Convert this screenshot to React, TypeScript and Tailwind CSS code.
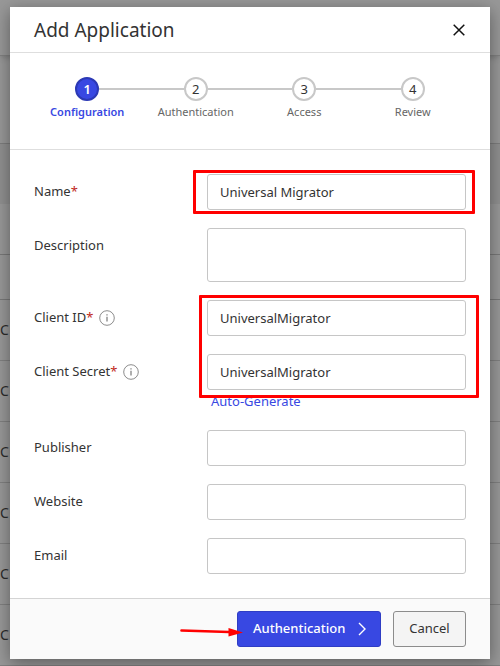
import React from 'react';

const steps = ['Configuration', 'Authentication', 'Access', 'Review'];

const inputClass =
  'block w-full h-9 px-3 rounded-[3px] border border-[#c6c6c6] bg-white text-[13px] text-[#333333] outline-none';

interface FieldProps {
  id: string;
  label: string;
  required?: boolean;
  info?: boolean;
  children: React.ReactNode;
}

function Field({ id, label, required, info, children }: FieldProps) {
  return (
    <div className="flex items-start">
      <div className="w-[173px] h-9 flex-shrink-0 flex items-center">
        <label htmlFor={id}>
          {label}
          {required && <span className="text-[#c0281c]">*</span>}
        </label>
        {info && <InfoIcon />}
      </div>
      <div className="relative flex-1 min-w-0">{children}</div>
    </div>
  );
}

function InfoIcon() {
  return (
    <svg className="w-4 h-4 ml-1.5 flex-shrink-0" viewBox="0 0 16 16" fill="none" stroke="#8c8c8c">
      <circle cx="8" cy="8" r="7.3" />
      <path d="M8 6.8v4.7" strokeWidth="1.4" />
      <path d="M8 4.2v1.4" strokeWidth="1.4" />
    </svg>
  );
}

function Stepper() {
  return (
    <ol className="grid grid-cols-4 px-[23px] pt-6 pb-7 border-b border-[#dedede]">
      {steps.map((step, i) => (
        <li key={step} className="relative flex flex-col items-center">
          {i > 0 && (
            <span className="absolute top-[11px] left-[calc(-50%+12px)] right-[calc(50%+12px)] h-0.5 bg-[#c8c8c8]" />
          )}
          <span
            className={`w-6 h-6 rounded-full border-2 flex items-center justify-center text-[13px] leading-5 ${
              i === 0 ? 'bg-[#3848e2] border-[#2c39b5] text-white font-semibold' : 'bg-white border-[#c8c8c8] text-[#333333]'
            }`}
          >
            {i + 1}
          </span>
          <span
            className={`mt-0.5 text-[11px] leading-[18px] ${i === 0 ? 'text-[#3848e2] font-semibold' : 'text-[#666666]'}`}
          >
            {step}
          </span>
        </li>
      ))}
    </ol>
  );
}

// Dimmed application list behind the dialog
function PageBehind() {
  return (
    <div aria-hidden="true" className="text-sm text-[#2b2b2b]">
      <div className="h-14 border-b border-[#808080] bg-[#989898] shadow-md" />
      <div className="h-[88px] border-b border-[#7d7d7d]" />
      <div className="h-[60px] bg-[#909090]" />
      <div className="h-[51px] border-b border-[#787878]" />
      <div className="h-[45px] border-b border-[#787878]" />
      {[0, 1, 2, 3, 4, 5].map((row) => (
        <div key={row} className="h-[61px] border-b border-[#808080] flex items-center">
          C
        </div>
      ))}
    </div>
  );
}

export default function App() {
  return (
    <div className="relative min-h-screen overflow-hidden bg-[#989898] font-['Noto_Sans',sans-serif]">
      <PageBehind />
      <div
        role="dialog"
        aria-labelledby="dialog-title"
        className="absolute top-[7px] inset-x-2.5 bg-white text-[13px] text-[#333333] shadow-[0_4px_16px_0_rgba(0,0,0,0.4)]"
      >
        <header className="h-[46px] pl-6 pr-[22px] flex items-center justify-between border-b border-[#dedede]">
          <h1 id="dialog-title" className="text-[19px] leading-6">Add Application</h1>
          <button type="button" aria-label="Close" className="w-[18px] h-[18px] flex items-center justify-center">
            <svg className="w-3 h-3" viewBox="0 0 12 12" fill="none" stroke="#111111" strokeWidth="1.5">
              <path d="M.7.7l10.6 10.6M11.3.7L.7 11.3" />
            </svg>
          </button>
        </header>

        <Stepper />

        <form>
          <div className="px-6 py-6 flex flex-col gap-[18px]">
            <Field id="name" label="Name" required>
              <input id="name" type="text" defaultValue="Universal Migrator" className={inputClass} />
              <span className="absolute -inset-y-1 -left-3.5 -right-[9px] border-3 border-[#ff0000] rounded-[1px] pointer-events-none" />
            </Field>
            <Field id="description" label="Description">
              <textarea
                id="description"
                className="block w-full h-[54px] px-3 py-2 rounded-[3px] border border-[#c6c6c6] bg-white resize-none outline-none"
              />
            </Field>
            <div className="relative flex flex-col gap-[18px]">
              <Field id="client-id" label="Client ID" required info>
                <input id="client-id" type="text" defaultValue="UniversalMigrator" className={inputClass} />
              </Field>
              <Field id="client-secret" label="Client Secret" required info>
                <input id="client-secret" type="text" defaultValue="UniversalMigrator" className={inputClass} />
                <a href="#generate" className="block h-[22px] pl-1 leading-[22px] text-[#3848e2]">
                  Auto-Generate
                </a>
              </Field>
              <span className="absolute -top-[5px] bottom-3.5 left-[165px] -right-[13px] border-3 border-[#ff0000] rounded-[1px] pointer-events-none" />
            </div>
            <Field id="publisher" label="Publisher">
              <input id="publisher" type="text" className={inputClass} />
            </Field>
            <Field id="website" label="Website">
              <input id="website" type="text" className={inputClass} />
            </Field>
            <Field id="email" label="Email">
              <input id="email" type="email" className={inputClass} />
            </Field>
          </div>

          <footer className="px-6 py-3 flex justify-end gap-3 border-t border-[#d4d4d4] bg-[#fafafa]">
            <div className="relative">
              <button
                type="button"
                className="w-36 h-9 pl-[15px] pr-3.5 flex items-center justify-between rounded-[3px] border border-[#2f3dc4] bg-[#3848e2] text-white font-medium"
              >
                Authentication
                <svg className="w-2 h-3.5" viewBox="0 0 8 14" fill="none" stroke="currentColor" strokeWidth="1.4">
                  <path d="M1 1l6 6-6 6" />
                </svg>
              </button>
              <svg className="absolute -left-[57px] top-4 w-16 h-2.5" viewBox="0 0 64 10" fill="#ff0000">
                <path d="M1.5 3.5L49 5" stroke="#ff0000" strokeWidth="2.6" strokeLinecap="round" />
                <path d="M48.500 1L63 5.500 48.500 9.500z" />
              </svg>
            </div>
            <button
              type="button"
              className="w-[73px] h-9 rounded-[3px] border border-[#8c8c8c] bg-[#f4f4f4] text-[#333333]"
            >
              Cancel
            </button>
          </footer>
        </form>
      </div>
    </div>
  );
}
